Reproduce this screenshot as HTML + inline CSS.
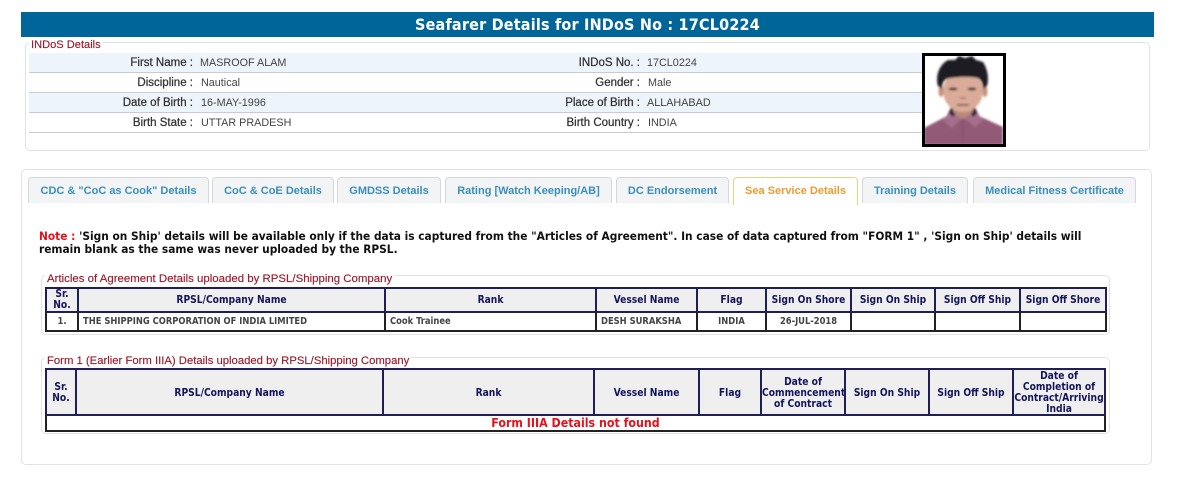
<!DOCTYPE html>
<html><head><meta charset="utf-8"><style>
html,body{margin:0;padding:0;background:#fff;width:1202px;height:482px;overflow:hidden}
body{position:relative;font-family:"Liberation Sans",sans-serif}
.a{position:absolute;white-space:nowrap}
.hdr{left:21px;top:12px;width:1133px;height:25px;background:#006699;color:#fff;font:bold 16px/25px "DejaVu Sans",sans-serif;text-align:center;font-stretch:condensed;letter-spacing:.2px}
.box{position:absolute;border:1px solid #dfe3e6;border-radius:5px;background:#fff;box-sizing:border-box}
.lg{position:absolute;background:#fff;color:#9a1c2e;font-size:11.35px;line-height:13px;padding:0 2px;white-space:nowrap;-webkit-text-stroke:.15px #9a1c2e}
.row{position:absolute;left:29px;width:893px;height:19px;border-bottom:1px solid #c8ccd0}
.blue{background:#edf4fb}
.l{position:absolute;font-size:11.5px;line-height:19px;color:#333;text-align:right;white-space:nowrap;-webkit-text-stroke:.25px #333;margin-top:1px}
.v{position:absolute;font-size:10.8px;line-height:19px;color:#444;white-space:nowrap;margin-top:1px}
.tab{position:absolute;top:177px;height:26px;box-sizing:border-box;border:1px solid #d5d8da;border-bottom:0;border-radius:4px 4px 0 0;background:#f3f4f5;color:#3a8fbd;font-weight:bold;font-size:11px;line-height:26px;text-align:center;white-space:nowrap}
.tab.on{height:28px;background:#fff;border-color:#f0d080;color:#ee9a2e;z-index:2}
.note{left:39px;top:230px;font:bold 11.8px/13px "DejaVu Sans",sans-serif;color:#111;font-stretch:condensed;white-space:pre}
.note b{color:#e8101c}
table{position:absolute;border-collapse:collapse;table-layout:fixed;font-family:"DejaVu Sans",sans-serif;font-stretch:condensed}
th{background:#efefef;color:#14145c;font-size:10.2px;line-height:11px;border:2px solid #1f1f55;padding:0;font-weight:bold;overflow:hidden}
td{border:2px solid #222;font-size:9.3px;font-weight:bold;color:#444;padding:0;white-space:nowrap;overflow:hidden}
.f th{position:relative;top:0}
.f th span{position:relative;top:1px}
.nf{color:#e8101c;font-size:12.3px;text-align:center;line-height:14px}
</style></head><body>
<div class="a hdr">Seafarer Details for INDoS No : 17CL0224</div>

<div class="box" style="left:25px;top:42px;width:1125px;height:109px"></div>
<div class="lg" style="left:29px;top:39px;font-size:11.1px">INDoS Details</div>
<div class="row blue" style="top:53px"></div>
<div class="row" style="top:73px"></div>
<div class="row blue" style="top:93px"></div>
<div class="row" style="top:113px"></div>

<div class="l" style="right:1009px;top:53px">First Name :</div><div class="v" style="left:200px;top:53px">MASROOF ALAM</div>
<div class="l" style="right:1009px;top:73px">Discipline :</div><div class="v" style="left:201px;top:73px">Nautical</div>
<div class="l" style="right:1009px;top:93px">Date of Birth :</div><div class="v" style="left:201px;top:93px">16-MAY-1996</div>
<div class="l" style="right:1009px;top:113px">Birth State :</div><div class="v" style="left:201px;top:113px">UTTAR PRADESH</div>
<div class="l" style="right:562px;top:53px">INDoS No. :</div><div class="v" style="left:647px;top:53px">17CL0224</div>
<div class="l" style="right:562px;top:73px">Gender :</div><div class="v" style="left:648px;top:73px">Male</div>
<div class="l" style="right:562px;top:93px">Place of Birth :</div><div class="v" style="left:647px;top:93px">ALLAHABAD</div>
<div class="l" style="right:562px;top:113px">Birth Country :</div><div class="v" style="left:648px;top:113px">INDIA</div>

<svg class="a" style="left:922px;top:53px" width="84" height="94" viewBox="0 0 84 94">
<defs><filter id="b"><feGaussianBlur stdDeviation="1"/></filter></defs>
<rect width="84" height="94" fill="#fff"/>
<g filter="url(#b)">
<path d="M2 92V75L25 63 32 56H50L57 63 81 74V92Z" fill="#935a78"/>
<path d="M25 62 30 52 41 64 30 75 21 67ZM57 62 52 52 41 64 53 74 61 67Z" fill="#a4708d"/>
<path d="M27 60 31 50 35 58 31 64ZM55 60 51 50 47 58 51 64Z" fill="#26202a"/>
<path d="M31 47H51V59L41 67 31 59Z" fill="#b98a7c"/>
<ellipse cx="41" cy="38" rx="20" ry="21" fill="#d9ab98"/>
<ellipse cx="19" cy="38" rx="2.5" ry="6" fill="#c9907c"/><ellipse cx="63" cy="38" rx="2.5" ry="6" fill="#c9907c"/>
<path d="M16 33C13 22 18 11 26 7L33 7 37 3 43 5 50 3 54 7 61 9C66 17 67 26 65 33L61 36C61 30 59 27 56 25 46 23 32 24 24 26 21 29 20 31 20 36Z" fill="#1f1c24"/>
<ellipse cx="31" cy="36" rx="4.5" ry="1.5" fill="#4b3230"/><ellipse cx="50" cy="36" rx="4.5" ry="1.5" fill="#4b3230"/>
<path d="M35 52H47" stroke="#8d5a58" stroke-width="2"/>
<path d="M38 45H44" stroke="#b27f70" stroke-width="2"/>
<path d="M41 65V92" stroke="#7d4a66"/>
</g>
<rect x="1.5" y="1.5" width="81" height="91" fill="none" stroke="#000" stroke-width="3"/>
</svg>

<div class="box" style="left:21px;top:169px;width:1131px;height:296px"></div>
<div class="tab" style="left:28px;width:181px">CDC &amp; "CoC as Cook" Details</div>
<div class="tab" style="left:212px;width:122px">CoC &amp; CoE Details</div>
<div class="tab" style="left:337px;width:104px">GMDSS Details</div>
<div class="tab" style="left:445px;width:167px">Rating [Watch Keeping/AB]</div>
<div class="tab" style="left:616px;width:113px">DC Endorsement</div>
<div class="tab on" style="left:733px;width:125px">Sea Service Details</div>
<div class="tab" style="left:862px;width:106px">Training Details</div>
<div class="tab" style="left:973px;width:163px">Medical Fitness Certificate</div>

<div class="a note"><b>Note : </b>'Sign on Ship' details will be available only if the data is captured from the "Articles of Agreement". In case of data captured from "FORM 1" , 'Sign on Ship' details will
remain blank as the same was never uploaded by the RPSL.</div>

<div class="box" style="left:41px;top:275px;width:1069px;height:60px"></div>
<div class="lg" style="left:45px;top:273px;font-size:11.45px">Articles of Agreement Details uploaded by RPSL/Shipping Company</div>
<table style="left:45px;top:287px;width:1060px">
<colgroup><col style="width:32px"><col style="width:307px"><col style="width:211px"><col style="width:101px"><col style="width:69px"><col style="width:85px"><col style="width:84px"><col style="width:85px"><col style="width:86px"></colgroup>
<tr style="height:24px"><th>Sr.<br>No.</th><th>RPSL/Company Name</th><th>Rank</th><th>Vessel Name</th><th>Flag</th><th>Sign On Shore</th><th>Sign On Ship</th><th>Sign Off Ship</th><th>Sign Off Shore</th></tr>
<tr style="height:19px"><td style="text-align:center">1.</td><td style="padding-left:4px">THE SHIPPING CORPORATION OF INDIA LIMITED</td><td style="padding-left:4px">Cook Trainee</td><td style="padding-left:4px">DESH SURAKSHA</td><td style="text-align:center">INDIA</td><td style="text-align:center">26-JUL-2018</td><td></td><td></td><td></td></tr>
</table>

<div class="box" style="left:41px;top:357px;width:1069px;height:77px"></div>
<div class="lg" style="left:45px;top:355px;font-size:11.3px">Form 1 (Earlier Form IIIA) Details uploaded by RPSL/Shipping Company</div>
<table class="f" style="left:45px;top:368px;width:1059px">
<colgroup><col style="width:30px"><col style="width:307px"><col style="width:211px"><col style="width:105px"><col style="width:62px"><col style="width:84px"><col style="width:84px"><col style="width:84px"><col style="width:92px"></colgroup>
<tr style="height:46px"><th><span>Sr.<br>No.</span></th><th><span>RPSL/Company Name</span></th><th><span>Rank</span></th><th><span>Vessel Name</span></th><th><span>Flag</span></th><th><span>Date of<br>Commencement<br>of Contract</span></th><th><span>Sign On Ship</span></th><th><span>Sign Off Ship</span></th><th><span>Date of<br>Completion of<br>Contract/Arriving<br>India</span></th></tr>
<tr style="height:16px"><td class="nf" colspan="9">Form IIIA Details not found</td></tr>
</table>
</body></html>
